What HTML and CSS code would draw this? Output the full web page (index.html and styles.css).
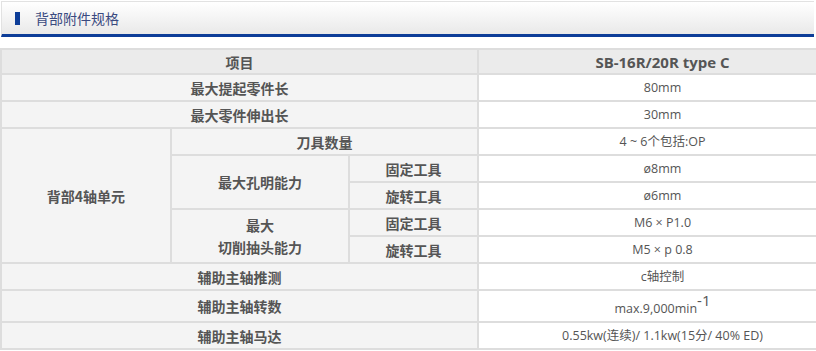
FILE: index.html
```html
<!DOCTYPE html>
<html lang="zh">
<head>
<meta charset="utf-8">
<link rel="stylesheet" href="styles.css">
</head>
<body>
<div class="page">
  <div class="title-bar">
    <span class="marker"></span>
    <h2 class="title">背部附件规格</h2>
  </div>
  <table class="spec">
    <colgroup>
      <col class="c1"><col class="c2"><col class="c3"><col class="c4">
    </colgroup>
    <thead>
      <tr class="head"><th colspan="3">项目</th><td>SB-16R/20R type C</td></tr>
    </thead>
    <tbody>
      <tr><th colspan="3">最大提起零件长</th><td>80mm</td></tr>
      <tr><th colspan="3">最大零件伸出长</th><td>30mm</td></tr>
      <tr><th rowspan="5">背部4轴单元</th><th colspan="2">刀具数量</th><td>4 ~ 6个包括:OP</td></tr>
      <tr><th rowspan="2">最大孔明能力</th><th>固定工具</th><td>ø8mm</td></tr>
      <tr><th>旋转工具</th><td>ø6mm</td></tr>
      <tr><th rowspan="2">最大<br>切削抽头能力</th><th>固定工具</th><td>M6 × P1.0</td></tr>
      <tr><th>旋转工具</th><td>M5 × p 0.8</td></tr>
      <tr><th colspan="3">辅助主轴推测</th><td>c轴控制</td></tr>
      <tr class="tall"><th colspan="3">辅助主轴转数</th><td class="rpm">max.9,000min<sup>-1</sup></td></tr>
      <tr><th colspan="3">辅助主轴马达</th><td>0.55kw(连续)/ 1.1kw(15分/ 40% ED)</td></tr>
    </tbody>
  </table>
</div>
</body>
</html>
```
FILE: styles.css
```css
html, body {
  margin: 0;
  padding: 0;
  background: #fff;
  overflow: hidden;
}
.page {
  width: 816px;
  font-family: "Open Sans", "Noto Sans CJK SC", sans-serif;
  color: #555;
}
.title-bar {
  margin: 1px 2px 0 1px;
  height: 32px;
  display: flex;
  align-items: center;
  border-top: 1px solid #e2e2e2;
  border-left: 1px solid #e2e2e2;
  background: linear-gradient(#ffffff, #e9e9e9);
  border-bottom: 3px solid #0d3d98;
}
.marker {
  width: 5px;
  height: 13px;
  background: #0d3d98;
  margin-left: 13px;
  margin-right: 15px;
}
.title {
  margin: 0;
  font-family: "Noto Sans CJK SC", sans-serif;
  font-weight: normal;
  font-size: 14px;
  color: #3a4a80;
}
.spec {
  margin-top: 11px;
  width: 848px;
  border-collapse: collapse;
  table-layout: fixed;
}
.c1 { width: 170px; }
.c2 { width: 178px; }
.c3 { width: 129px; }
.spec th, .spec td {
  border: 2px solid #dddddd;
  height: 25px;
  padding: 0;
  text-align: center;
  vertical-align: middle;
}
.spec th {
  background: #f4f4f4;
  font-family: "Noto Sans CJK SC", sans-serif;
  font-weight: bold;
  font-size: 14px;
  line-height: 22px;
  color: #555;
}
.spec td {
  background: #fff;
  font-family: "Open Sans", "Noto Sans CJK SC", sans-serif;
  font-size: 12.5px;
  line-height: 18px;
  color: #555;
}
.spec .head th, .spec .head td {
  background: #ebebeb;
  height: 23px;
  line-height: 20px;
}
.spec .head td {
  font-weight: bold;
  font-size: 15px;
}
.spec .tall th, .spec .tall td {
  height: 30px;
}
.spec .tall .rpm {
  vertical-align: bottom;
  padding-bottom: 3px;
  height: 27px;
}
.spec sup {
  font-size: 15px;
  line-height: 0;
  vertical-align: 7px;
}
```
